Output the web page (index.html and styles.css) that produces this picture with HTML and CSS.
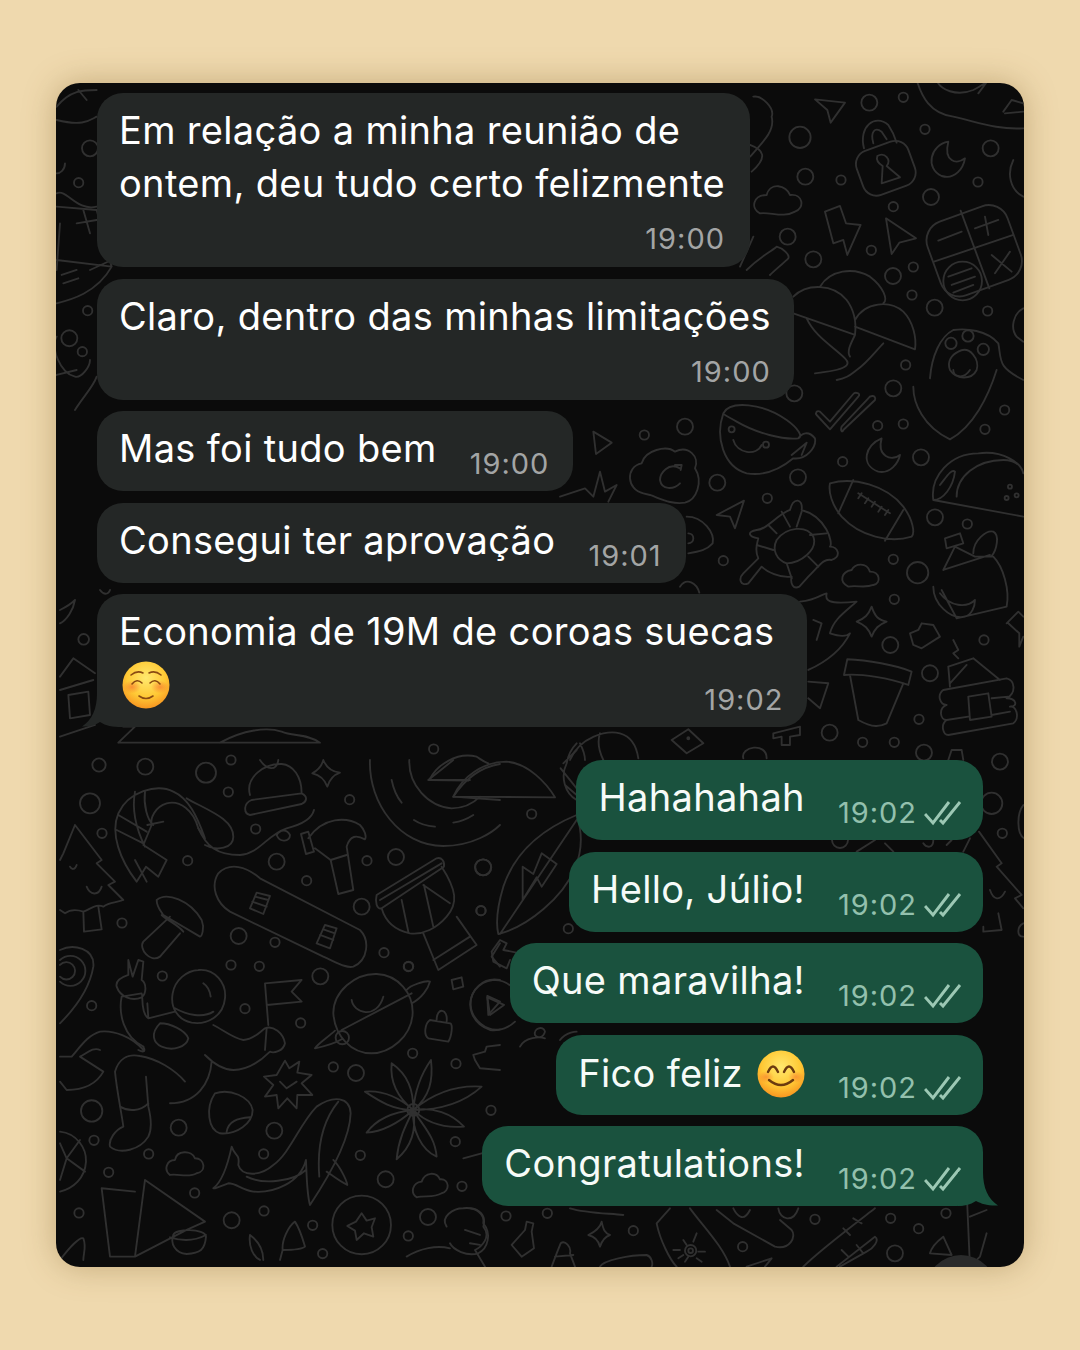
FILE: index.html
```html
<!DOCTYPE html>
<html lang="pt">
<head>
<meta charset="utf-8">
<title>Conversa</title>
<link rel="stylesheet" href="styles.css">
</head>
<body>
<main class="panel">
  <svg class="doodles" viewBox="56 83 968 1184" aria-hidden="true">
    <!-- lower left field -->
    <g transform="translate(60 760) scale(.3333)">
      <g>
        <circle cx="90" cy="130" r="30"/><circle cx="126" cy="220" r="14"/><circle cx="383" cy="302" r="14"/><circle cx="186" cy="489" r="14"/><circle cx="438" cy="38" r="30"/><circle cx="505" cy="96" r="14"/><circle cx="587" cy="207" r="14"/><circle cx="650" cy="305" r="24"/><circle cx="740" cy="362" r="14"/><circle cx="869" cy="119" r="14"/><circle cx="921" cy="302" r="14"/><circle cx="1008" cy="291" r="24"/><circle cx="1270" cy="322" r="24"/><circle cx="1263" cy="452" r="14"/><circle cx="905" cy="440" r="24"/><circle cx="536" cy="528" r="24"/><circle cx="645" cy="547" r="14"/><circle cx="972" cy="578" r="14"/><circle cx="1046" cy="619" r="14"/><circle cx="513" cy="615" r="14"/><circle cx="598" cy="619" r="14"/><circle cx="781" cy="649" r="24"/><circle cx="307" cy="648" r="14"/><circle cx="95" cy="737" r="14"/><circle cx="555" cy="746" r="14"/><circle cx="722" cy="789" r="14"/><circle cx="1058" cy="880" r="14"/><circle cx="820" cy="921" r="14"/><circle cx="888" cy="939" r="24"/><circle cx="1188" cy="911" r="14"/><circle cx="95" cy="1053" r="32"/><circle cx="356" cy="1103" r="24"/><circle cx="643" cy="1112" r="24"/><circle cx="102" cy="1141" r="14"/><circle cx="266" cy="1182" r="14"/><circle cx="146" cy="1237" r="14"/><circle cx="611" cy="1182" r="14"/><circle cx="901" cy="1186" r="14"/><circle cx="1186" cy="1145" r="14"/><circle cx="1293" cy="1051" r="14"/><circle cx="977" cy="1258" r="24"/><circle cx="1206" cy="1279" r="14"/><circle cx="404" cy="1299" r="14"/><circle cx="515" cy="1381" r="24"/><circle cx="612" cy="1353" r="14"/><circle cx="57" cy="1359" r="14"/><circle cx="758" cy="1396" r="14"/><circle cx="1104" cy="1371" r="24"/><circle cx="1045" cy="1428" r="14"/><circle cx="788" cy="1481" r="14"/><circle cx="117" cy="15" r="20"/><circle cx="256" cy="20" r="24"/>
      </g>
      <!-- shrimp -->
      <path d="M230 365 C180 300 150 220 175 160 C205 95 290 70 340 95 C385 115 410 165 435 235 L415 205 C400 150 360 120 320 130 C285 140 270 175 275 195 L250 255 L320 300 L295 350 L258 320 Z M225 95 C215 150 230 210 255 260 M175 165 L260 215 M255 95 C250 135 262 180 280 195 M170 210 L250 250 M225 300 L260 365 M262 195 L310 185"/>
      <path d="M415 205 C440 260 470 285 540 285 C600 280 620 225 680 205 C720 195 755 180 762 150 M650 225 C660 210 680 205 690 225 C690 245 660 250 650 225 M380 115 C440 150 520 175 520 230 C520 265 470 275 435 255"/>
      <!-- tree -->
      <path d="M45 195 L125 300 L110 310 L165 365 L145 375 L190 420 C165 430 150 425 130 440 C110 430 95 445 70 455 C55 450 35 445 15 460 L0 450 M70 455 L72 515 L125 508 L115 440 M45 195 L10 280 L0 300 M30 320 C35 330 45 330 50 315 M80 380 C90 405 115 410 125 380"/>
      <!-- beanie -->
      <path d="M570 105 C555 50 615 10 665 12 C700 15 725 50 725 100 M575 120 L725 100 C745 110 740 125 725 132 L570 165 C550 160 550 130 575 120 Z M600 0 C620 30 650 35 655 0"/>
      <!-- sparkle -->
      <path d="M790 0 C800 25 815 35 840 38 C820 45 808 60 802 80 C795 60 780 45 757 40 C775 30 785 20 790 0 Z"/>
      <!-- record -->
      <path d="M930 0 C925 130 1020 258 1150 258 C1240 258 1300 215 1320 195 M1048 0 C1045 75 1105 140 1175 145 C1210 145 1240 130 1260 110 M995 60 C1000 85 1010 110 1025 128 M1062 180 C1080 192 1100 198 1125 200 M1180 188 C1200 185 1220 178 1240 165 M1105 60 L1180 0 M1105 60 L1230 60 M1180 110 C1220 50 1270 20 1320 12 M1180 110 L1320 120"/>
      <!-- hammer -->
      <path d="M723 222 L745 215 L762 275 L738 282 Z M745 235 C790 170 860 170 900 195 C915 210 920 230 915 238 C890 225 870 225 860 260 L880 390 L835 402 L812 300 L765 265"/>
      <path d="M812 300 L860 285"/>
      <!-- snowboard -->
      <path d="M475 340 C510 305 560 320 600 355 L900 510 C930 540 925 600 880 620 C860 625 835 610 790 590 L510 455 C470 430 450 380 475 340 Z"/>
      <path d="M590 398 L630 408 L610 462 L570 445 Z M577 425 L620 440 M585 410 L625 420 M795 495 L830 505 L810 565 L770 550 Z M780 525 L820 540 M790 508 L825 520"/>
      <!-- drum -->
      <path d="M950 405 L1130 295 C1145 290 1155 305 1152 320 L965 445 C950 450 945 425 950 405 Z M960 420 L1145 310 M1145 320 C1190 390 1195 430 1160 470 C1130 505 1090 525 1050 520 C1000 510 975 480 965 445 M1090 520 L1135 630 L1250 555 L1190 470 M1120 600 L1230 530 M1025 420 L1045 515 M1092 375 L1120 500 M1090 375 L1170 430"/>
      <!-- mushroom -->
      <path d="M290 420 C320 395 390 420 425 480 C435 505 425 530 420 530 L310 465 C300 450 290 440 290 420 Z M330 470 L250 545 C235 565 270 610 300 590 L360 520 M305 465 C320 480 355 495 370 515"/>
      <!-- avocado -->
      <path d="M0 570 C40 550 105 565 100 620 C90 680 50 740 0 790 M0 600 a45 45 0 1 1 0 65 M0 615 a26 26 0 1 1 0 35"/>
      <!-- astronaut -->
      <path d="M415 630 C465 625 500 670 495 715 C490 770 440 795 395 788 C355 780 330 745 338 700 C345 660 380 632 415 630 Z M345 745 C380 765 430 775 460 755 M430 670 C445 680 450 695 452 710"/>
      <path d="M345 755 L265 775 C240 760 250 700 245 700 L185 710 C175 760 190 830 250 860 M262 730 L265 775 M205 600 L218 650 L235 600 L250 605 L245 660 C260 670 260 700 245 712 C215 725 180 710 170 680 C165 660 190 650 205 645 Z"/>
      <path d="M300 790 C330 790 375 810 385 835 C380 860 340 875 305 860 C280 850 270 820 300 790 Z M250 870 C215 830 160 810 120 815 C85 825 65 855 35 890 L0 890 M120 870 C100 860 80 880 60 890 L130 935 C105 980 60 990 20 990 L0 965 M250 860 C260 880 245 875 235 870"/>
      <path d="M460 795 C490 810 520 835 550 840 C580 840 600 815 615 805 C640 795 670 820 675 850 C670 875 640 880 630 875 C600 905 560 930 520 930 C490 930 465 915 435 885 M620 805 L615 870 M455 905 C450 970 410 1030 330 1030 M165 935 C175 900 200 880 240 888 C290 895 345 930 375 965 M165 935 C170 990 185 1060 190 1100 C165 1110 145 1140 150 1160 C180 1185 240 1170 265 1130 C280 1100 270 1060 265 1040 L258 950 M180 1040 C205 1055 240 1055 265 1030"/>
      <!-- flag -->
      <path d="M615 670 L725 660 L695 695 L725 725 L620 735 M615 670 L625 795"/>
      <!-- planet -->
      <path d="M820 760 C820 695 885 640 950 642 C1015 645 1060 700 1058 760 C1055 830 990 880 935 880 C875 880 825 830 820 760 Z M1040 690 C1050 675 1100 660 1110 665 C1105 685 1085 715 1055 730 M845 810 L1055 700 M825 812 C800 835 775 850 765 865 C790 860 825 850 845 838 M875 720 C880 760 950 780 970 710"/>
      <circle cx="847" cy="833" r="20"/>
      <!-- lock -->
      <path d="M1110 780 L1170 790 C1180 790 1175 830 1165 845 L1105 835 C1090 825 1095 790 1110 780 Z M1130 780 C1130 740 1165 745 1160 785"/>
      <!-- play -->
      <path d="M1320 660 C1270 650 1230 690 1232 735 C1235 780 1280 815 1320 808 M1282 708 L1320 725 L1285 765 Z M1175 660 L1205 652 L1210 680 L1180 688 Z"/>
      <!-- puzzle -->
      <path d="M1320 855 L1280 860 L1275 875 L1240 885 L1245 900 L1260 925 L1320 930 M1320 550 L1295 590 L1320 620"/>
      <!-- burst -->
      <path d="M675 902 L688 925 L718 905 L712 938 L755 945 L725 970 L757 1005 L712 1005 L710 1045 L682 1015 L655 1045 L650 1005 L615 1010 L640 975 L612 950 L650 945 Z M660 965 L680 985 L710 965"/>
      <!-- pebble -->
      <path d="M465 1000 C510 985 570 1010 578 1050 C578 1090 530 1125 480 1120 C445 1110 435 1045 465 1000 Z M500 1115 C505 1085 530 1075 570 1072"/>
      <!-- whale -->
      <path d="M460 1285 C480 1270 500 1230 515 1160 C525 1190 540 1180 535 1215 C545 1250 600 1250 640 1215 C690 1180 720 1090 770 1040 C820 1005 870 1010 872 1060 C870 1130 820 1230 750 1335 C740 1300 740 1240 738 1200 C720 1270 640 1300 580 1295 C545 1290 530 1270 505 1270 L465 1285 Z M835 1025 C790 1080 770 1150 778 1250 M820 1200 C840 1220 860 1260 862 1275 C840 1265 815 1245 800 1235 M560 1250 C610 1275 700 1265 738 1230"/>
      <!-- flower -->
      <path d="M1060 1050 C1010 1010 990 960 995 910 C1045 945 1060 990 1060 1050 Z M1060 1050 C1065 990 1085 940 1113 900 C1120 960 1110 1010 1060 1050 Z M1060 1050 C1120 1000 1190 975 1265 980 C1210 1030 1140 1050 1060 1050 Z M1060 1050 C1120 1040 1175 1060 1212 1100 C1150 1105 1100 1090 1060 1050 Z M1060 1050 C1090 1100 1125 1130 1130 1190 C1085 1170 1055 1110 1060 1050 Z M1060 1050 C1035 1100 1015 1140 1010 1198 C1055 1160 1070 1110 1060 1050 Z M1060 1050 C1020 1085 970 1115 920 1118 C955 1070 1010 1055 1060 1050 Z M1060 1050 C1000 1050 960 1025 915 995 C970 990 1020 1015 1060 1050 Z"/>
      <circle cx="1060" cy="1050" r="18"/>
      <!-- globe -->
      <path d="M0 1115 C50 1120 80 1165 78 1205 C75 1255 40 1285 0 1295 M0 1150 L20 1195 L75 1235 M20 1195 L0 1260 M20 1195 L60 1140"/>
      <!-- clouds -->
      <path d="M330 1245 C310 1230 320 1200 345 1200 C350 1170 395 1170 405 1195 C435 1195 440 1235 410 1240 C385 1255 355 1240 330 1245 Z M1070 1312 C1050 1298 1058 1268 1085 1265 C1095 1235 1130 1235 1140 1258 C1170 1255 1170 1295 1145 1300 C1120 1315 1095 1305 1070 1312 Z"/>
      <!-- mountains -->
      <path d="M125 1285 L150 1490 L225 1490 L255 1260 L435 1385 L380 1410 L225 1490 M125 1285 L225 1295 M340 1425 C345 1405 435 1405 438 1430 C435 1470 420 1480 380 1482 C345 1480 330 1450 340 1425 Z M330 1432 C370 1445 410 1440 438 1425 M0 1500 C30 1460 60 1430 70 1435 C80 1460 70 1480 70 1500"/>
      <!-- star coin -->
      <circle cx="905" cy="1395" r="88"/>
      <path d="M905 1360 L920 1382 L945 1375 L935 1402 L940 1430 L912 1420 L890 1440 L885 1412 L862 1398 L888 1385 Z"/>
      <!-- fox -->
      <path d="M570 1425 C590 1440 610 1465 610 1500 M570 1425 C565 1460 580 1490 600 1500 M705 1385 C685 1400 665 1440 668 1470 C690 1470 725 1470 735 1460 C725 1425 715 1400 705 1385 Z M668 1470 L660 1500"/>
      <!-- head -->
      <path d="M1160 1400 C1140 1370 1180 1345 1210 1345 C1250 1340 1275 1365 1270 1390 C1295 1420 1285 1465 1255 1480 C1220 1490 1180 1470 1170 1450 M1215 1410 L1260 1425 M1230 1450 L1260 1455 M1040 1490 C1080 1465 1130 1455 1170 1465"/>
      <path d="M1210 1195 L1320 1165"/>
    </g>

    <!-- centre column -->
    <g transform="translate(400 730) scale(.3333)">
      <path d="M88 150 C110 105 170 65 230 80 C245 90 250 95 265 100 M88 150 L205 152 M160 200 C185 140 250 95 320 95 C385 100 440 160 465 202 Z M530 255 C445 290 350 350 310 470 C295 520 285 570 295 612 C385 590 490 500 525 415 C550 355 545 300 530 255 Z M300 612 L530 270 M425 370 L470 402 L425 470 L410 442 L368 510 L368 410 L400 432 Z"/>
      <circle cx="395" cy="252" r="14"/><circle cx="249" cy="412" r="24"/><circle cx="243" cy="542" r="14"/><circle cx="505" cy="596" r="14"/><circle cx="25" cy="710" r="14"/><circle cx="101" cy="57" r="14"/>
      <path d="M275 665 L300 630 L320 640 L310 660 L360 670 M275 665 L280 695 L320 715 L330 690"/>
      <path d="M335 770 C300 740 255 745 225 780 C195 825 215 880 270 900 C300 905 330 890 345 875 M262 802 L312 825 L270 855 Z M490 100 L530 60 M530 210 C495 190 480 140 500 100 C505 70 520 50 530 40 M482 115 L530 175 M495 165 L530 195"/>
      <path d="M405 915 C400 895 430 885 435 905 C430 925 410 925 405 915 M360 950 C375 920 420 920 435 925 M480 930 C500 905 530 905 530 905"/>
    </g>

    <!-- top right field -->
    <g transform="translate(740 80) scale(.3333)">
      <circle cx="388" cy="68" r="24"/><circle cx="490" cy="52" r="14"/><circle cx="180" cy="172" r="32"/><circle cx="555" cy="148" r="14"/><circle cx="752" cy="205" r="24"/><circle cx="196" cy="290" r="24"/><circle cx="303" cy="300" r="14"/><circle cx="714" cy="306" r="14"/><circle cx="573" cy="351" r="24"/><circle cx="460" cy="380" r="14"/><circle cx="143" cy="470" r="24"/><circle cx="220" cy="538" r="24"/><circle cx="394" cy="511" r="14"/><circle cx="520" cy="561" r="14"/><circle cx="459" cy="588" r="24"/><circle cx="516" cy="645" r="14"/><circle cx="584" cy="683" r="24"/><circle cx="743" cy="693" r="14"/><circle cx="497" cy="855" r="14"/>
      <path d="M225 58 L315 68 L272 128 L262 90 Z"/>
      <rect x="355" y="195" width="165" height="140" rx="42" transform="rotate(-20 437 265)"/>
      <path d="M372 205 C355 140 405 100 445 135 C455 150 465 170 470 188 M400 190 C390 155 405 140 425 155 L440 178 M412 228 C435 215 455 240 440 258 L480 292 L425 310 L428 258 C415 250 408 240 412 228 Z"/>
      <path d="M625 185 C570 195 555 265 605 288 C645 300 670 265 675 235 C650 255 610 245 625 185 Z"/>
      <path d="M60 400 C30 385 40 345 80 345 C90 305 140 315 150 345 C190 340 195 385 165 395 C130 415 90 395 60 400 Z"/>
      <path d="M255 395 L300 378 L318 430 L362 435 L322 525 L310 480 L280 490 Z"/>
      <path d="M438 415 L528 475 L478 488 L455 522 Z"/>
      <rect x="575" y="395" width="255" height="235" rx="60" transform="rotate(-20 702 512)"/>
      <path d="M662 392 L748 625 M582 545 L820 465 M595 482 L665 455 M705 445 L775 420 M735 410 L745 465 M755 525 L815 575 M810 515 L765 580"/>
      <circle cx="668" cy="603" r="58"/>
      <path d="M625 590 L695 565 M635 615 L705 590 M640 638 L700 615"/>
      <path d="M530 0 C545 50 570 100 640 110 C710 125 770 150 850 145 M590 0 C600 30 650 50 700 30 C720 20 735 10 745 0 M715 40 L745 0 M790 95 L815 60 L850 70 M795 100 L850 95"/>
      <path d="M820 240 C800 280 810 330 850 350"/>
      <path d="M40 50 C65 45 105 85 95 110 C105 150 75 180 30 230 M30 195 C70 210 85 230 35 275"/>
      <path d="M20 570 C60 530 85 520 110 500 C130 505 150 525 145 535 C130 550 105 570 90 585 M0 560 L40 470"/>
      <!-- hats -->
      <path d="M160 650 C200 610 280 610 320 660 C350 700 348 740 345 765 L160 700 M240 620 C270 570 340 560 390 590 C430 620 445 660 430 670 M345 720 C375 665 450 660 490 695 C520 725 530 775 525 808 L345 740 M200 715 C225 770 280 800 315 835 C335 855 320 870 225 880 M345 765 C330 795 320 815 330 830 M430 790 C410 810 380 850 350 870 C330 885 320 895 290 900"/>
      <!-- paw -->
      <path d="M570 895 C575 830 600 770 640 750 C680 745 740 750 775 790 C785 840 770 860 850 900"/>
      <circle cx="633" cy="790" r="17"/><circle cx="684" cy="768" r="17"/><circle cx="730" cy="808" r="17"/>
      <path d="M655 815 C690 795 720 840 710 870 C695 900 650 900 630 870 C620 845 635 825 655 815 Z"/>
      <path d="M850 685 C820 700 810 745 830 770 L850 785"/>
    </g>

    <!-- middle right field -->
    <g transform="translate(560 370) scale(.3333)">
      <circle cx="375" cy="170" r="24"/><circle cx="253" cy="195" r="14"/><circle cx="472" cy="338" r="24"/><circle cx="622" cy="385" r="14"/><circle cx="714" cy="322" r="24"/><circle cx="848" cy="275" r="14"/><circle cx="1083" cy="262" r="24"/><circle cx="1000" cy="55" r="24"/><circle cx="953" cy="167" r="14"/><circle cx="1030" cy="162" r="14"/><circle cx="1275" cy="178" r="14"/><circle cx="1334" cy="120" r="14"/><circle cx="1125" cy="442" r="24"/><circle cx="1222" cy="462" r="14"/><circle cx="1000" cy="568" r="14"/><circle cx="1073" cy="608" r="32"/><circle cx="1003" cy="688" r="14"/><circle cx="490" cy="572" r="14"/><circle cx="991" cy="825" r="24"/><circle cx="1272" cy="810" r="14"/><circle cx="1110" cy="910" r="24"/><circle cx="1077" cy="1048" r="14"/><circle cx="809" cy="1088" r="24"/><circle cx="908" cy="1117" r="14"/><circle cx="1003" cy="1117" r="14"/><circle cx="1092" cy="1148" r="24"/><circle cx="1320" cy="1175" r="24"/><circle cx="703" cy="70" r="24"/>
      <path d="M100 185 L155 218 L108 252 Z"/>
      <!-- cup -->
      <path d="M490 130 C510 90 610 100 680 150 C715 175 730 200 715 205 C670 210 590 190 530 155 C505 140 490 135 490 130 Z M490 130 C465 200 490 290 560 310 C620 320 670 290 700 265 C740 270 770 230 765 205 C745 180 725 190 715 205 M695 255 L740 218 L725 255 M520 210 C530 250 590 260 605 225"/>
      <circle cx="515" cy="178" r="9"/><circle cx="618" cy="224" r="9"/>
      <!-- double check -->
      <path d="M770 135 L810 178 L895 80 C905 70 885 65 880 72 L810 155 L780 125 C770 120 765 130 770 135 Z M850 180 L945 90 C950 75 930 75 925 85 L845 170 C840 185 848 188 850 180 Z"/>
      <!-- shield -->
      <path d="M1060 50 C1060 100 1090 170 1170 208 C1240 170 1285 80 1310 0 M1180 0 C1180 20 1210 30 1230 0"/>
      <!-- moon -->
      <path d="M965 205 C915 225 900 285 955 305 C990 312 1015 280 1020 255 C995 275 950 260 965 205 Z"/>
      <!-- cloud refresh -->
      <path d="M250 370 C200 360 195 290 245 280 C255 240 320 225 345 245 C385 225 420 260 405 295 C430 335 410 390 375 398 C335 405 300 385 270 375 Z M360 295 C325 275 300 310 300 330 C305 360 340 360 360 340 M345 285 L365 285 L362 300"/>
      <!-- plant -->
      <path d="M0 380 L75 355 L100 380 L120 305 L135 365 L170 345 L145 395 M0 330 L20 290"/>
      <!-- arrow -->
      <path d="M470 435 L552 392 L525 475 L510 440 Z"/>
      <!-- football -->
      <path d="M810 340 C880 320 980 345 1030 410 C1060 450 1065 490 1055 500 C990 520 900 500 845 440 C815 405 805 365 810 340 Z M880 330 L835 430 M1030 420 L975 512 M895 370 L990 430 M905 370 L895 385 M925 385 L915 400 M945 395 L935 410 M965 410 L955 425 M985 420 L975 435"/>
      <!-- taco -->
      <path d="M1120 390 C1110 320 1170 250 1255 250 C1330 240 1385 280 1390 310 M1120 390 L1390 440 M1190 380 C1190 320 1250 270 1330 270 C1370 270 1385 290 1390 310 M1120 390 C1150 390 1180 350 1185 305 C1175 295 1160 320 1140 345"/>
      <circle cx="1350" cy="350" r="6"/><circle cx="1370" cy="376" r="6"/><circle cx="1340" cy="384" r="6"/>
      <!-- turtle -->
      <path d="M690 420 C700 380 730 385 725 420 C800 440 820 520 810 530 C835 530 845 560 815 570 C790 565 780 585 745 620 L718 650 C700 660 690 640 695 620 C660 625 620 605 605 590 L565 640 C540 650 535 625 550 610 L595 565 C585 545 590 525 595 505 C565 500 560 485 590 480 C620 480 650 435 690 420 Z"/>
      <path d="M650 510 C680 470 740 465 760 500 C775 540 720 580 680 580 C650 570 635 540 650 510 Z M690 470 L665 425 M750 495 L800 490 M745 560 L775 590 M680 580 L695 625 M640 540 L590 525 M650 490 L625 465 M710 470 L725 425"/>
      <!-- shopping -->
      <path d="M1150 600 L1185 530 L1245 560 L1300 560 C1330 590 1350 660 1340 710 L1190 745 L1145 660 M1150 600 L1290 555 M1155 505 L1200 490 L1210 520 L1160 535 Z M1240 550 C1240 510 1280 480 1300 485 C1320 495 1310 540 1295 558 M1120 650 C1120 700 1170 750 1215 740 C1235 735 1245 710 1245 690 C1220 715 1170 710 1140 670"/>
      <!-- cloud, sparkle -->
      <path d="M865 650 C835 635 845 605 875 600 C885 580 920 575 930 605 C960 605 965 640 940 645 C915 655 890 645 865 650 Z M935 710 C945 740 955 750 980 755 C955 765 945 775 935 800 C925 775 915 765 890 755 C915 745 925 735 935 710 Z"/>
      <!-- spiky fragments -->
      <path d="M720 695 C770 690 790 670 800 670 C795 690 800 705 890 695 C850 730 820 750 810 790 C840 800 860 800 870 790 C850 830 810 870 745 900 M760 750 L785 760 L770 810 M745 935 L805 940 L780 1015 L745 985"/>
      <!-- block -->
      <path d="M1050 790 L1075 780 L1085 760 L1120 765 L1140 800 L1085 835 L1060 825 Z"/>
      <!-- pot -->
      <path d="M862 868 C920 870 1010 885 1055 905 L1045 945 C990 925 905 910 852 915 Z M870 915 L895 1050 C940 1075 960 1070 980 1060 L1030 940"/>
      <!-- cabin -->
      <path d="M1180 810 L1195 840 L1180 850 L1195 865 M1165 890 L1240 865 L1320 930 M1165 890 L1170 950 M1220 885 L1170 940 M1150 960 L1340 925 C1365 930 1370 970 1340 985 M1150 960 C1130 975 1140 1005 1160 1005 M1160 1005 C1135 1015 1140 1050 1160 1050 L1225 1040 M1160 1050 C1140 1065 1150 1095 1165 1095 L1360 1060 C1380 1045 1370 1005 1350 1010 M1340 985 C1370 985 1375 1010 1350 1010 M1225 980 L1285 970 L1295 1040 L1230 1050 Z M1295 985 L1345 980 M1295 1035 L1350 1025"/>
      <!-- bolt fragment -->
      <path d="M1340 760 L1375 725 L1390 740 M1345 760 L1378 790 L1378 830 L1390 800"/>
      <!-- bits under the bubble -->
      <path d="M30 1170 C60 1100 140 1080 180 1090 C215 1100 230 1130 235 1165 M120 1090 C110 1120 120 1150 130 1170 M60 1120 C70 1140 75 1155 75 1170 M335 1110 L385 1078 L430 1120 L380 1150 Z M640 1090 L720 1070 L720 1095 L690 1100 L690 1125 L665 1125 L665 1100 L640 1105 Z M550 1165 C540 1130 620 1115 620 1165 M1165 1170 L1175 1140 L1205 1140 L1210 1170"/>
      <circle cx="385" cy="1105" r="3"/>
      <path d="M380 440 C430 440 465 490 458 520 C440 540 420 545 385 550 M385 490 a14 14 0 1 1 0 30 M360 650 C380 620 410 640 418 668"/>
    </g>

    <!-- left edge -->
    <g transform="translate(40 70) scale(.3333)">
      <circle cx="116" cy="338" r="14"/><circle cx="150" cy="235" r="24"/><circle cx="143" cy="722" r="14"/>
      <path d="M50 110 C90 60 130 60 170 60 M50 150 C130 170 150 150 170 140 M115 60 L140 90 M50 370 C80 355 110 425 170 410 M75 280 C75 300 60 310 50 310 M50 410 L170 420 L215 590 C170 670 90 690 50 700 M60 460 L50 600 M130 420 L150 490 M110 460 L170 450 M50 570 L215 590 M70 640 L115 625 M65 615 L110 600 M150 600 L215 570"/>
      <circle cx="88" cy="805" r="24"/><circle cx="127" cy="845" r="14"/>
      <path d="M50 800 C30 830 60 910 105 920 C125 925 150 890 150 870 M50 915 L110 900 M105 1020 C130 980 160 950 170 920"/>
    </g>
    <!-- left edge, lower -->
    <g transform="translate(60 590) scale(.3333)">
      <circle cx="71" cy="148" r="16"/><circle cx="513" cy="510" r="14"/>
      <path d="M0 100 C20 90 40 60 45 30 C30 45 10 55 0 60 M0 260 L40 205 L105 250 M0 300 L100 270 M25 315 L85 305 L90 375 L30 385 Z M0 440 L105 405 M175 458 L225 410 L190 410 M175 458 L780 458 C740 430 700 440 665 425 C620 410 550 420 480 458 M120 0 C130 15 145 15 150 0"/>
    </g>
    <!-- bottom band -->
    <g transform="translate(470 1190) scale(.3333)">
      <circle cx="108" cy="78" r="14"/><circle cx="232" cy="70" r="14"/><circle cx="490" cy="122" r="14"/><circle cx="818" cy="170" r="14"/><circle cx="1035" cy="88" r="14"/><circle cx="1262" cy="85" r="14"/><circle cx="1346" cy="116" r="14"/><circle cx="1428" cy="70" r="14"/><circle cx="1275" cy="190" r="24"/><circle cx="662" cy="182" r="17"/><circle cx="662" cy="182" r="7"/>
      <path d="M0 55 C25 55 50 75 40 110 C65 140 35 170 15 180 L45 230 M125 165 L165 120 L170 95 L190 100 L185 125 L192 175 L155 200 Z M395 95 C400 120 405 130 420 135 C405 140 395 155 390 170 C385 150 375 140 355 135 C375 125 390 115 395 95 Z M245 230 L260 190 L272 160 C285 150 305 170 300 190 L315 230 M255 200 L310 195 M390 230 C400 210 480 195 530 195 C545 200 550 220 545 230 M600 55 L560 100 C570 150 600 210 620 230 M660 55 C700 110 760 170 780 230 M830 230 L905 205 L885 230 M300 55 C350 70 420 70 460 75 M740 60 L790 100 L915 170 C960 180 980 140 965 120 L930 90 M790 55 C800 75 820 100 840 60 M925 55 C930 90 970 100 985 55 M1000 230 C1050 180 1170 90 1215 55 M1100 230 L1215 140 C1230 150 1210 175 1190 185 L1110 230 M1120 115 L1140 135 M1150 85 L1175 100 M1135 200 L1115 180 M1160 165 L1180 190 M1420 140 L1445 195 L1380 190 C1385 170 1400 155 1420 140 Z M1490 0 L1500 230 L1530 200 L1550 130 M1490 0 L1550 40 M1500 80 L1550 60"/>
      <path d="M640 150 L650 165 M610 180 L630 180 M680 130 L670 155 M705 185 L685 185 M645 215 L655 200 M695 215 L680 205 M625 205 L640 195"/>
    </g>
    <!-- right edge lower -->
    <g transform="translate(820 780) scale(.3333)">
      <circle cx="515" cy="70" r="32"/><circle cx="547" cy="160" r="14"/><circle cx="60" cy="180" r="24"/>
      <path d="M477 155 L545 250 L530 260 L605 345 L585 355 L610 385 M510 330 C520 360 540 365 555 335 M490 440 L490 455 L545 450 L535 400 M430 215 L450 175 M610 75 C590 100 590 160 612 175 M110 215 L165 180 M220 215 L195 190 M310 190 C320 205 340 205 340 180 M380 195 L395 180 M610 430 C590 440 590 470 610 470"/>
    </g>
  </svg>

  <div class="chat">
    <section class="group group-in">
      <article class="bubble in stack first">
        <p class="text">Em relação a minha reunião de<br>ontem, deu tudo certo felizmente</p>
        <div class="meta-row"><time class="time">19:00</time></div>
      </article>
      <article class="bubble in stack">
        <p class="text">Claro, dentro das minhas limitações</p>
        <div class="meta-row"><time class="time">19:00</time></div>
      </article>
      <article class="bubble in line">
        <p class="text">Mas foi tudo bem</p>
        <time class="time low">19:00</time>
      </article>
      <article class="bubble in line">
        <p class="text">Consegui ter aprovação</p>
        <time class="time low">19:01</time>
      </article>
      <article class="bubble in tail-in wide">
        <p class="text">Economia de 19M de coroas suecas</p>
        <div class="emoji-row">
          <svg class="emoji" viewBox="0 0 48 48" aria-label="☺️">
            <defs>
              <radialGradient id="face-a" cx=".5" cy=".35" r=".68"><stop offset="0" stop-color="#ffe96f"/><stop offset=".6" stop-color="#ffc935"/><stop offset="1" stop-color="#f7901e"/></radialGradient>
              <radialGradient id="blush-a"><stop offset="0" stop-color="#f4562c" stop-opacity=".5"/><stop offset="1" stop-color="#f4562c" stop-opacity="0"/></radialGradient>
            </defs>
            <circle cx="24" cy="24" r="23.5" fill="url(#face-a)"/>
            <ellipse cx="10" cy="26" rx="9" ry="6.5" fill="url(#blush-a)"/>
            <ellipse cx="38" cy="26" rx="9" ry="6.5" fill="url(#blush-a)"/>
            <path class="emoji-line" d="M9 14 Q15 9 21 12 M27 12 Q33 9 39 14 M10 23 Q15 17 20 22 M28 22 Q33 17 38 23"/>
            <path class="emoji-line" d="M17 35 Q24 40 31 35"/>
          </svg>
          <time class="time low">19:02</time>
        </div>
      </article>
    </section>

    <section class="group group-out">
      <article class="bubble out line">
        <p class="text">Hahahahah</p>
        <div class="time-wrap low"><time class="time">19:02</time><svg class="ticks" viewBox="0 0 38 26"><path d="M1 14 L9 23 L25 2 M16 20 L19 23 L36 2"/></svg></div>
      </article>
      <article class="bubble out line">
        <p class="text">Hello, Júlio!</p>
        <div class="time-wrap low"><time class="time">19:02</time><svg class="ticks" viewBox="0 0 38 26"><path d="M1 14 L9 23 L25 2 M16 20 L19 23 L36 2"/></svg></div>
      </article>
      <article class="bubble out line">
        <p class="text">Que maravilha!</p>
        <div class="time-wrap low"><time class="time">19:02</time><svg class="ticks" viewBox="0 0 38 26"><path d="M1 14 L9 23 L25 2 M16 20 L19 23 L36 2"/></svg></div>
      </article>
      <article class="bubble out line">
        <p class="text with-emoji">Fico feliz
          <svg class="emoji" viewBox="0 0 48 48" aria-label="😊">
            <defs>
              <radialGradient id="face-b" cx=".5" cy=".35" r=".68"><stop offset="0" stop-color="#ffe96f"/><stop offset=".6" stop-color="#ffc935"/><stop offset="1" stop-color="#f7901e"/></radialGradient>
              <radialGradient id="blush-b"><stop offset="0" stop-color="#f4562c" stop-opacity=".45"/><stop offset="1" stop-color="#f4562c" stop-opacity="0"/></radialGradient>
            </defs>
            <circle cx="24" cy="24" r="23.5" fill="url(#face-b)"/>
            <ellipse cx="9" cy="27" rx="8" ry="6" fill="url(#blush-b)"/>
            <ellipse cx="39" cy="27" rx="8" ry="6" fill="url(#blush-b)"/>
            <path class="emoji-bold" d="M11 22 Q16 11 21 22 M27 22 Q32 11 37 22 M12 30 Q24 40 36 30"/>
          </svg>
        </p>
        <div class="time-wrap low"><time class="time">19:02</time><svg class="ticks" viewBox="0 0 38 26"><path d="M1 14 L9 23 L25 2 M16 20 L19 23 L36 2"/></svg></div>
      </article>
      <article class="bubble out line tail-out">
        <p class="text">Congratulations!</p>
        <div class="time-wrap low"><time class="time">19:02</time><svg class="ticks" viewBox="0 0 38 26"><path d="M1 14 L9 23 L25 2 M16 20 L19 23 L36 2"/></svg></div>
      </article>
    </section>
  </div>
  <div class="scroll-peek"></div>
</main>
</body>
</html>
```

FILE: styles.css
```css
* { box-sizing: border-box; }

html, body { margin: 0; height: 100%; }

body {
  width: 1080px;
  height: 1350px;
  padding: 83px 56px;
  background: #efd9ae;
  font-family: "Inter", "Liberation Sans", sans-serif;
  overflow: hidden;
}

.panel {
  position: relative;
  height: 1184px;
  border-radius: 24px;
  background: #0b0b0b;
  overflow: clip;
  box-shadow: 0 0 32px rgba(120, 85, 30, .36);
}

.doodles {
  position: absolute;
  inset: 0;
  width: 968px;
  height: 1184px;
  fill: none;
  stroke: #303030;
  stroke-width: 5.6;
  stroke-linejoin: round;
  stroke-linecap: round;
}

.chat {
  position: relative;
  display: flex;
  flex-direction: column;
  gap: 33px;
  padding: 10px 41px 0;
}

.group {
  display: flex;
  flex-direction: column;
  gap: 11.5px;
}

.group-in { align-items: flex-start; }
.group-out { align-items: flex-end; }

.bubble {
  position: relative;
  padding: 11px 23px 1px 22px;
  border-radius: 26px;
  color: #fff;
}

.first { padding-right: 25px; }

.in { background: #242726; }
.out { background: #1a523e; color: #f6fbf8; }

.text {
  margin: 0;
  font-size: 38px;
  line-height: 53px;
  letter-spacing: .33px;
  white-space: nowrap;
}

.line {
  display: flex;
  padding-bottom: 13px;
  padding-right: 24px;
  gap: 33px;
}

.out.line { padding-right: 21px; }

.wide { padding-bottom: 13px; padding-right: 33px; }

.wide .time { margin-right: -9px; }

.meta-row {
  display: flex;
  justify-content: flex-end;
  height: 56px;
  padding-top: 15px;
}

.time {
  display: block;
  font-size: 29px;
  line-height: 28px;
  color: #a3a5a5;
  letter-spacing: 1px;
}

.out .time { color: #93c0ad; }

.low { margin-top: 28px; }

.time-wrap {
  display: flex;
  align-items: center;
  gap: 7px;
  height: 28px;
}

.ticks {
  width: 38px;
  height: 26px;
  fill: none;
  stroke: #9cc8b4;
  stroke-width: 2.9;
}

.emoji-row {
  display: flex;
  justify-content: space-between;
  align-items: flex-start;
}

.emoji {
  display: block;
  width: 48px;
  height: 48px;
  margin: 3px 0 0 3px;
  flex: none;
}

.with-emoji {
  display: flex;
  align-items: center;
  gap: 14px;
}

.with-emoji .emoji { margin: 0; }

.emoji-line {
  fill: none;
  stroke: #8a4b12;
  stroke-width: 1.6;
  stroke-linecap: round;
}

.emoji-bold {
  fill: none;
  stroke: #6b3a0f;
  stroke-width: 2.4;
  stroke-linecap: round;
}

.tail-in::before {
  content: "";
  position: absolute;
  left: -15px;
  bottom: 0;
  width: 40px;
  height: 34px;
  background: #242726;
  clip-path: path("M15 0 C15 16 10 27 0 33.5 C8 34 14 32 18 29 C24 33 30 34 40 34 L40 0 Z");
}

.tail-out::after {
  content: "";
  position: absolute;
  right: -15px;
  bottom: 0;
  width: 40px;
  height: 34px;
  background: #1a523e;
  clip-path: path("M25 0 C25 16 30 27 40 33.5 C30 34 24 32 18 29 C12 33 6 34 0 34 L0 0 Z");
}

.scroll-peek {
  position: absolute;
  right: 28px;
  bottom: -58px;
  width: 70px;
  height: 70px;
  border-radius: 50%;
  background: #2a2b2b;
}
```
